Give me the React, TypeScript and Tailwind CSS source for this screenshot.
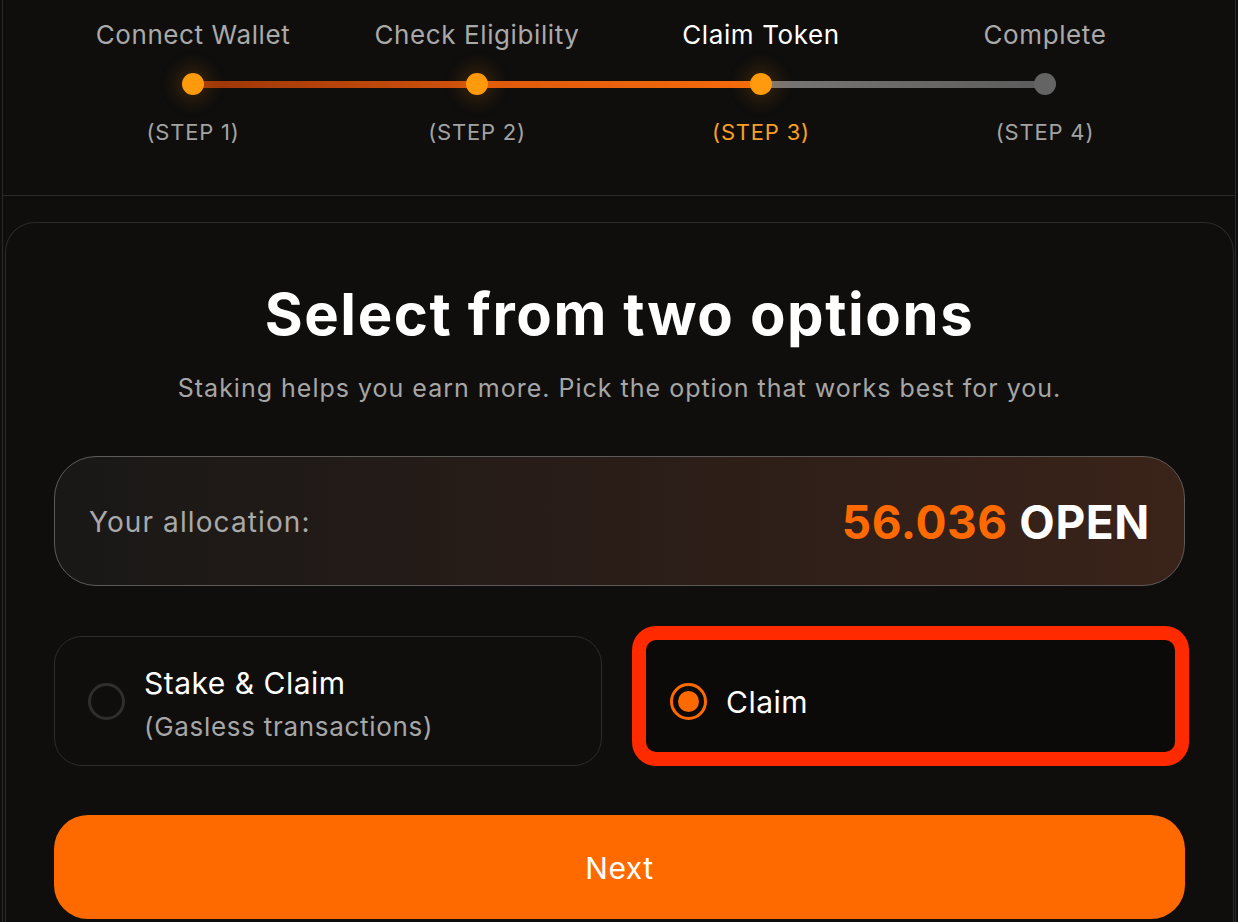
import React from "react";

const steps = [
  { label: "Connect Wallet", step: "(STEP 1)", state: "done" },
  { label: "Check Eligibility", step: "(STEP 2)", state: "done" },
  { label: "Claim Token", step: "(STEP 3)", state: "active" },
  { label: "Complete", step: "(STEP 4)", state: "todo" },
];

function Stepper() {
  return (
    <div className="h-[196px] shrink-0 border-b border-[#2a2a2a] px-[48px] pt-[19px]">
      <div className="grid grid-cols-4">
        {steps.map((s) => (
          <div
            key={s.label}
            className={
              "text-center text-[26px] leading-[32px] tracking-[0.6px] " +
              (s.state === "active" ? "text-white" : "text-[#a9a9a9]")
            }
          >
            {s.label}
          </div>
        ))}
      </div>
      <div className="relative mt-[22px] grid h-[22px] grid-cols-4">
        <div className="absolute left-[142px] top-[8px] h-[7px] w-[284px] bg-gradient-to-r from-[#9c3508] to-[#d2520c]" />
        <div className="absolute left-[426px] top-[8px] h-[7px] w-[284px] bg-gradient-to-r from-[#df580b] to-[#f56c0a]" />
        <div className="absolute left-[710px] top-[8px] h-[7px] w-[284px] bg-gradient-to-r from-[#7a7775] to-[#5c5c5c]" />
        {steps.map((s) => (
          <div key={s.label} className="flex justify-center">
            <div
              className={
                "relative h-[22px] w-[22px] rounded-full " +
                (s.state === "todo"
                  ? "bg-[#646464]"
                  : "bg-[#ff9a0c] shadow-[0_0_18px_6px_rgba(255,140,0,0.18)]")
              }
            />
          </div>
        ))}
      </div>
      <div className="mt-[23px] grid grid-cols-4">
        {steps.map((s) => (
          <div
            key={s.step}
            className={
              "text-center text-[22px] leading-[28px] tracking-[0.8px] " +
              (s.state === "active" ? "text-[#f7a024]" : "text-[#a3a3a3]")
            }
          >
            {s.step}
          </div>
        ))}
      </div>
    </div>
  );
}

function Radio({ checked }: { checked: boolean }) {
  return checked ? (
    <div className="flex h-[37px] w-[37px] shrink-0 items-center justify-center rounded-full border-[3px] border-[#ff6a00]">
      <div className="h-[21px] w-[21px] rounded-full bg-[#ff6a00]" />
    </div>
  ) : (
    <div className="h-[37px] w-[37px] shrink-0 rounded-full border-[3px] border-[#2e2e2e]" />
  );
}

export default function App() {
  return (
    <div
      className="h-[922px] w-[1238px] overflow-hidden bg-[#0f0e0d]"
      style={{ fontFamily: "Inter, 'Noto Sans', sans-serif" }}
    >
      <div className="mx-[2px] flex h-full flex-col border-x border-[#2a2a2a]">
        <Stepper />
        <div className="ml-[2px] mr-[1px] mt-[26px] flex-1 rounded-t-[30px] border border-b-0 border-[#2a2a2a] px-[48px] pt-[57px]">
          <h1 className="text-center text-[58px] font-bold leading-[68px] tracking-[1.6px] text-white">
            Select from two options
          </h1>
          <p className="mt-[24px] text-center text-[25px] leading-[32px] tracking-[1px] text-[#a6a6a6]">
            Staking helps you earn more. Pick the option that works best for you.
          </p>

          <div className="mt-[52px] flex h-[130px] items-center justify-between rounded-[42px] border-[1.5px] border-[#5e5a58] bg-gradient-to-r from-[#191817] via-[#2a1d18] to-[#3a2319] px-[34px]">
            <span className="pt-[2px] text-[28px] tracking-[1.1px] text-[#a9a9a9]">Your allocation:</span>
            <span className="pt-[2px] text-[46px] font-bold tracking-[0.6px]">
              <span className="text-[#ff6a00]">56.036</span>{" "}
              <span className="text-white">OPEN</span>
            </span>
          </div>

          <div className="mt-[50px] grid grid-cols-[548px_1fr] gap-[32px]">
            <div className="flex h-[130px] items-center gap-[19px] rounded-[28px] border border-[#2c2c2c] pl-[33px]">
              <Radio checked={false} />
              <div className="pt-[4px]">
                <div className="text-[30px] leading-[38px] tracking-[0.5px] text-white">Stake &amp; Claim</div>
                <div className="mt-[9px] text-[26px] leading-[32px] tracking-[0.7px] text-[#a6a6a6]">
                  (Gasless transactions)
                </div>
              </div>
            </div>
            <div className="relative flex h-[130px] items-center gap-[19px] rounded-[28px] bg-[#0b0a09] pl-[36px]">
              <Radio checked={true} />
              <div className="pt-[2px] text-[30px] leading-[38px] tracking-[0.5px] text-white">Claim</div>
              <div className="pointer-events-none absolute -left-[2px] -right-[4px] -top-[10px] bottom-0 rounded-[24px] border-[14px] border-[#ff2a00]" />
            </div>
          </div>

          <button className="mt-[49px] flex h-[104px] w-full items-center justify-center rounded-[34px] bg-[#ff6a00] pt-[2px] text-[30px] tracking-[0.6px] text-white">
            Next
          </button>
        </div>
      </div>
    </div>
  );
}
